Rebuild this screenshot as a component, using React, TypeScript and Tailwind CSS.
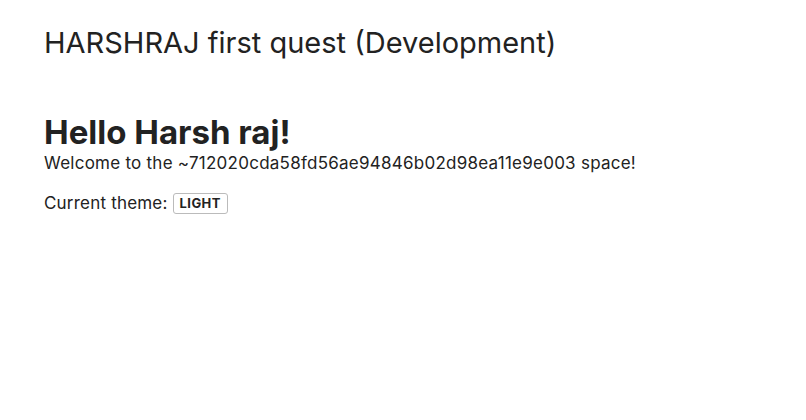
import React from 'react'

export default function App() {
  const spaceId = '~712020cda58fd56ae94846b02d98ea11e9e003'
  const theme = 'light'

  return (
    <div className="min-h-screen bg-white text-[#222] px-[44px] pt-[24px]" style={{ fontFamily: 'Inter, "Noto Sans", sans-serif' }}>
      {/* App title */}
      <h1 className="text-[29px] leading-[38px] font-normal">HARSHRAJ first quest (Development)</h1>

      {/* Greeting */}
      <div className="mt-[50px]">
        <h2 className="text-[33px] leading-[40px] font-bold">Hello Harsh raj!</h2>
        <p className="text-[17px] leading-[22px] tracking-[0.25px]">Welcome to the {spaceId} space!</p>
        <p className="mt-[18px] text-[17px] leading-[22px] tracking-[0.2px] flex items-center gap-[5px]">
          Current theme:
          <span className="inline-block border border-[#bbb] rounded-[3px] px-[6px] text-[13px] leading-[19px] font-bold uppercase tracking-[0.4px]">
            {theme}
          </span>
        </p>
      </div>
    </div>
  )
}
